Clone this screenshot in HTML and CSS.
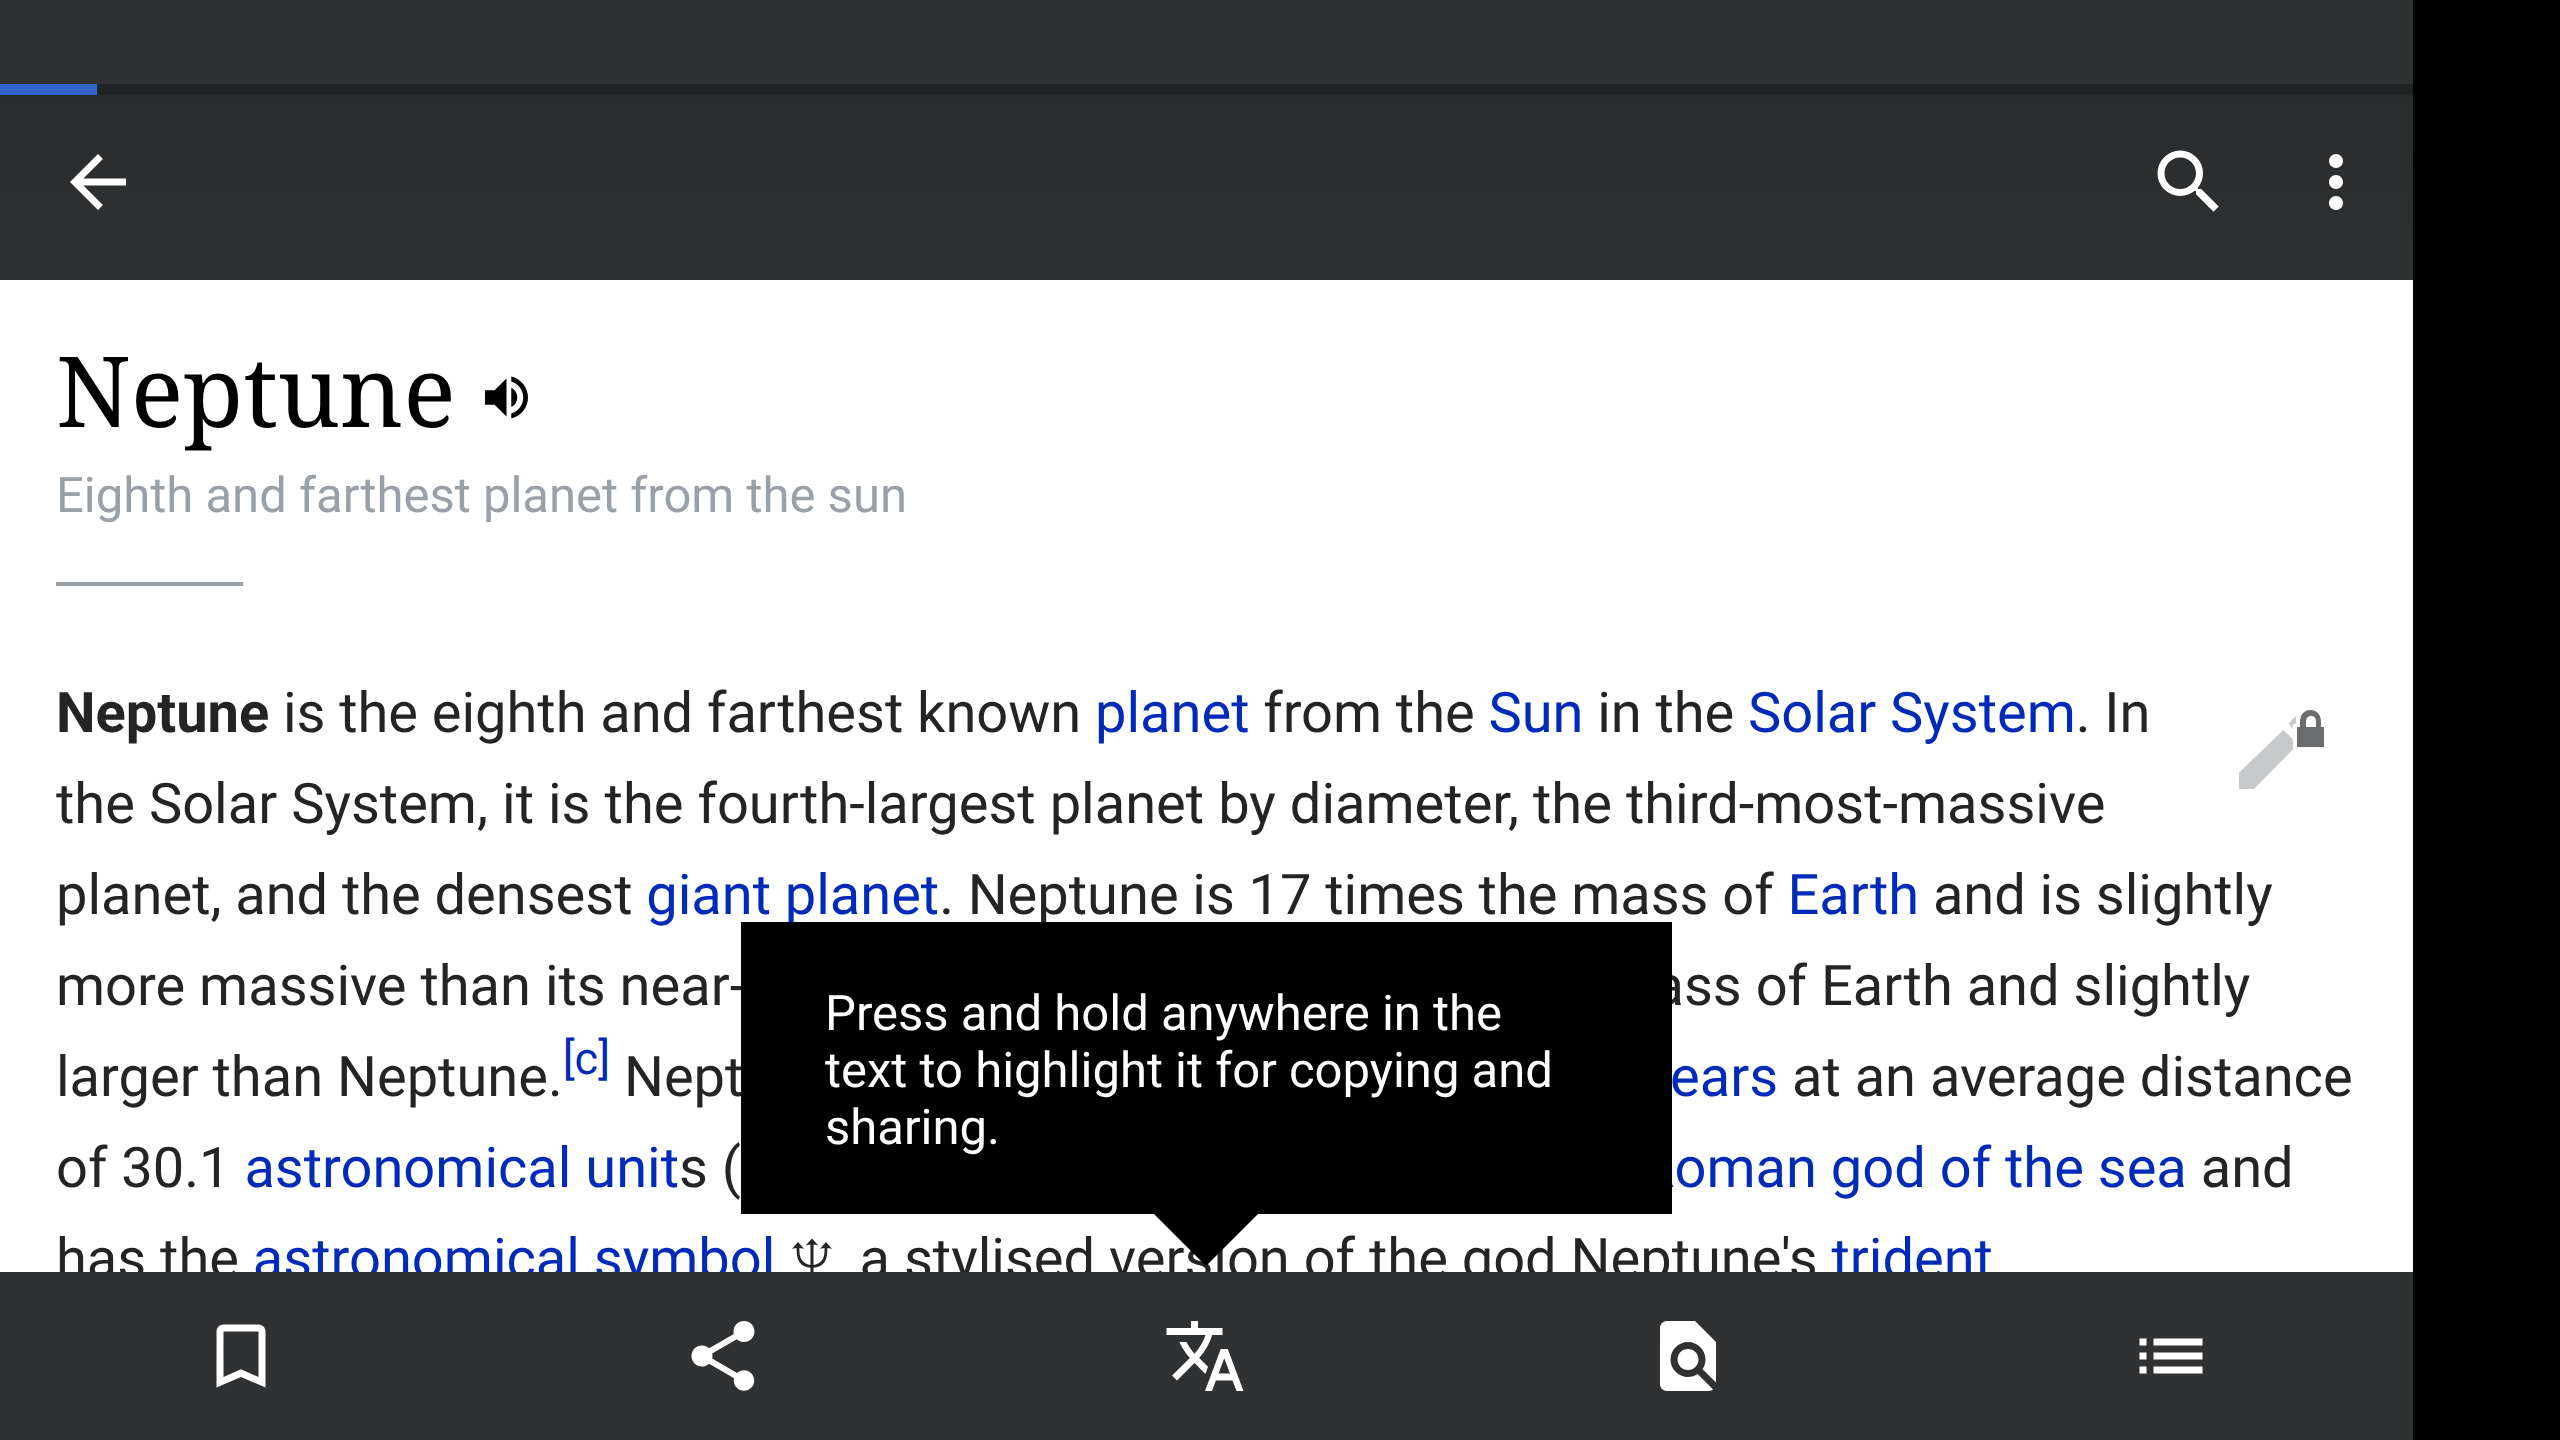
FILE: index.html
```html
<!DOCTYPE html>
<html lang="en">
<head>
<meta charset="utf-8">
<title>Neptune</title>
<link rel="stylesheet" href="styles.css">
</head>
<body>
<div class="app">
  <div class="status"></div>
  <header class="toolbar">
    <div class="progress"><div class="progress-value"></div></div>
    <div class="actions">
      <svg class="icon" viewBox="0 0 24 24"><path d="M20 11H7.83l5.59-5.59L12 4l-8 8 8 8 1.41-1.41L7.83 13H20v-2z"/></svg>
      <svg class="icon search" viewBox="0 0 24 24"><path d="M15.5 14h-.79l-.28-.27A6.471 6.471 0 0 0 16 9.5 6.5 6.5 0 1 0 9.5 16c1.61 0 3.09-.59 4.23-1.57l.27.28v.79l5 4.99L20.49 19l-4.99-5zm-6 0C7.01 14 5 11.99 5 9.5S7.01 5 9.5 5 14 7.01 14 9.5 11.99 14 9.5 14z"/></svg>
      <svg class="icon more" viewBox="0 0 24 24"><path d="M12 8c1.1 0 2-.9 2-2s-.9-2-2-2-2 .9-2 2 .9 2 2 2zm0 2c-1.1 0-2 .9-2 2s.9 2 2 2 2-.9 2-2-.9-2-2-2zm0 6c-1.1 0-2 .9-2 2s.9 2 2 2 2-.9 2-2-.9-2-2-2z"/></svg>
    </div>
  </header>
  <main class="article">
    <div class="heading">
      <h1>Neptune</h1>
      <svg class="speaker" viewBox="3 3 18 18"><path d="M3 9v6h4l5 5V4L7 9H3zm13.5 3c0-1.77-1.02-3.29-2.5-4.03v8.05c1.48-.73 2.5-2.25 2.5-4.02zM14 3.23v2.06c2.89.86 5 3.54 5 6.71s-2.11 5.85-5 6.71v2.06c4.01-.91 7-4.49 7-8.77s-2.99-7.86-7-8.77z"/></svg>
    </div>
    <p class="subtitle">Eighth and farthest planet from the sun</p>
    <div class="divider"></div>
    <div class="body">
      <svg class="edit" viewBox="0 0 255 237">
        <path fill="#c8c9ca" d="M0 188 133 60l29 28v30L45 237H0zM149 40l20-20h2v20l-10 4v13z"/>
        <path fill="#6b6c6e" d="M174 51h9V32a31.500 32 0 0 1 63 0v19h9v60h-81zm27 0h30V34a15 17 0 0 0-30 0z"/>
      </svg>
      <div class="line tight"><b>Neptune</b> is the eighth and farthest known <a>planet</a> from the <a>Sun</a> in the <a>Solar System</a>. In</div>
      <div class="line loose">the Solar System, it is the fourth-largest planet by diameter, the third-most-massive</div>
      <div class="line tight">planet, and the densest <a>giant planet</a>. Neptune is 17 times the mass of <a>Earth</a> and is slightly</div>
      <div class="line">more massive than its near-<span class="covered">twin Uranus, which is 15 times the m</span>ass of Earth and slightly</div>
      <div class="line">larger than Neptune.<sup><a>[c]</a></sup> Nept<span class="covered">une orbits the Sun once every 164.8 <a>y</a></span><a>ears</a> at an average distance</div>
      <div class="line">of 30.1 <a>astronomical unit</a>s (<span class="covered name-origin">4.50×10⁹ km). It is named after the</span><a>Roman god of the sea</a> and</div>
      <div class="line">has the <a>astronomical symbol</a> <span class="symbol">♆</span>, a stylised version of the god Neptune's <a>trident</a></div>
    </div>
    <div class="tooltip">Press and hold anywhere in the text to highlight it for copying and sharing.</div>
  </main>
  <nav class="tabs">
    <svg class="icon" viewBox="0 0 24 24"><path d="M17 3H7c-1.1 0-1.990.9-1.990 2L5 21l7-3 7 3V5c0-1.100-.9-2-2-2zm0 15l-5-2.180L7 18V5h10v13z"/></svg>
    <svg class="icon" viewBox="0 0 24 24"><path d="M18 16.080c-.76 0-1.440.3-1.960.77L8.910 12.700c.05-.23.09-.46.09-.7s-.04-.47-.09-.7l7.050-4.110c.54.5 1.250.81 2.040.81 1.660 0 3-1.340 3-3s-1.340-3-3-3-3 1.340-3 3c0 .24.04.47.09.7L8.040 9.810C7.500 9.310 6.790 9 6 9c-1.660 0-3 1.340-3 3s1.340 3 3 3c.79 0 1.500-.31 2.040-.81l7.120 4.160c-.05.21-.08.43-.08.65 0 1.610 1.310 2.920 2.920 2.920s2.920-1.310 2.920-2.920-1.310-2.920-2.920-2.920z"/></svg>
    <svg class="icon" viewBox="0 0 24 24"><path d="M12.870 15.070l-2.540-2.510.03-.03A17.520 17.520 0 0 0 14.070 6H17V4h-7V2H8v2H1v1.990h11.170C11.500 7.920 10.440 9.750 9 11.350 8.070 10.320 7.300 9.190 6.690 8h-2c.73 1.630 1.730 3.170 2.980 4.560l-5.090 5.020L4 19l5-5 3.110 3.110.76-2.040zM18.500 10h-2L12 22h2l1.120-3h4.750L21 22h2l-4.500-12zm-2.620 7l1.620-4.330L19.120 17h-3.240z"/></svg>
    <svg class="icon" viewBox="0 0 24 24"><path d="M20 19.590V8l-6-6H6c-1.100 0-1.990.9-1.990 2L4 20c0 1.100.89 2 1.990 2H18c.45 0 .85-.15 1.190-.4l-4.430-4.430c-.8.52-1.740.83-2.760.83-2.760 0-5-2.240-5-5s2.240-5 5-5 5 2.240 5 5c0 1.020-.31 1.960-.83 2.750L20 19.590zM9 13c0 1.660 1.340 3 3 3s3-1.340 3-3-1.340-3-3-3-3 1.340-3 3z"/></svg>
    <svg class="icon" viewBox="0 0 24 24"><path d="M3 13h2v-2H3v2zm0 4h2v-2H3v2zm0-8h2V7H3v2zm4 4h14v-2H7v2zm0 4h14v-2H7v2zM7 7v2h14V7H7z"/></svg>
  </nav>
</div>
</body>
</html>
```
FILE: styles.css
```css
* { box-sizing: border-box; }

body {
  margin: 0;
  background: #000;
  font-family: Roboto, "Liberation Sans", sans-serif;
  text-rendering: geometricPrecision;
  overflow: hidden;
}

.app {
  display: flex;
  flex-direction: column;
  width: 2413px;
  height: 1440px;
}

.status { height: 84px; background: #303133; }

.toolbar {
  display: flex;
  flex-direction: column;
  height: 196px;
  background: linear-gradient(#292a2c, #303133);
}

.progress { height: 11px; background: #222325; }
.progress-value { width: 97px; height: 11px; background: #36c; }

.actions {
  display: flex;
  align-items: center;
  padding: 45px 35px 0 56px;
}

.icon { display: block; width: 84px; height: 84px; fill: #fff; }
.search { margin-left: auto; }
.more { margin-left: 63px; }

.article {
  position: relative;
  flex: none;
  height: 992px;
  padding: 0 56px;
  background: #fff;
  overflow: hidden;
}

.heading { display: flex; align-items: center; height: 180px; padding-top: 37px; }

h1 {
  margin: 0;
  font: 400 98px/120px "Noto Serif", "DejaVu Serif Condensed", "DejaVu Serif", serif;
  color: #000;
}

.speaker { width: 43px; height: 43px; margin: 18px 0 0 29px; }

.subtitle {
  margin: 0;
  padding-top: 6px;
  font-size: 49px;
  line-height: 60px;
  color: #9aa0a8;
}

.divider { width: 187px; height: 4px; margin-top: 56px; background: #99a0a8; }

.body {
  margin-top: 82px;
  font-size: 56px;
  line-height: 91px;
  color: #242424;
}

.line { white-space: nowrap; }
.tight { word-spacing: -0.17px; }
.loose { word-spacing: 0.15px; }
.body a { color: #002bb8; }
.body sup { font-size: 45px; line-height: 0; vertical-align: 22px; }
.covered { display: inline-block; vertical-align: bottom; height: 91px; }
.name-origin { width: 899px; }
.symbol { font-family: "Noto Sans Symbols", "Noto Sans Symbols 2", "DejaVu Sans", sans-serif; line-height: 0; }
.edit { float: right; width: 85px; height: 79px; margin: 42px 33px 0 0; }

.tooltip {
  position: absolute;
  left: 741px;
  top: 642px;
  width: 931px;
  height: 292px;
  padding: 63px 84px;
  background: #000;
  color: #fff;
  font-size: 49px;
  line-height: 57px;
}

.tooltip::after {
  content: "";
  position: absolute;
  left: 413px;
  top: 292px;
  border: solid transparent;
  border-width: 52px 52.5px 0;
  border-top-color: #000;
}

.tabs {
  display: grid;
  grid-template-columns: 482px 482px 482px 484px 482px;
  place-items: center;
  height: 168px;
  background: #303133;
}
```
